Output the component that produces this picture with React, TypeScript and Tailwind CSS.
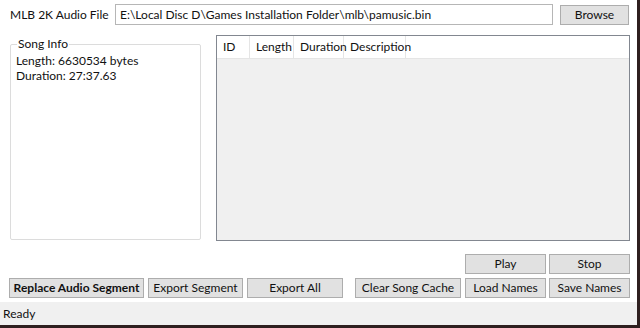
const font = { fontFamily: 'Lato, "Segoe UI", "Noto Sans", sans-serif' }

function WinButton({ label, className = '', bold = false }: { label: string; className?: string; bold?: boolean }) {
  return (
    <button
      type="button"
      className={`flex h-[20px] shrink-0 items-center justify-center whitespace-nowrap border border-[#adadad] bg-[#e1e1e1] text-[12px] leading-none text-[#111] ${bold ? 'font-bold' : ''} ${className}`}
    >
      {label}
    </button>
  )
}

const columns = [
  { name: 'ID', width: 'w-[33px]' },
  { name: 'Length', width: 'w-[44px]' },
  { name: 'Duration', width: 'w-[50px]' },
  { name: 'Description', width: 'w-[62px]' },
]

export default function App() {
  return (
    <div style={font} className="flex h-[328px] w-[640px] flex-col border-r-[3px] border-b-[3px] border-[#2e1f1f] bg-white text-[12px] text-[#111]">
      <div className="flex flex-1 flex-col">
        <div className="flex h-[28px] items-center pt-[1px]">
          <span className="ml-[10px] w-[105px] whitespace-nowrap">MLB 2K Audio File</span>
          <div className="flex h-[21px] w-[438px] items-center whitespace-nowrap border border-[#b6b6b6] bg-white px-[4px]">
            E:\Local Disc D\Games Installation Folder\mlb\pamusic.bin
          </div>
          <WinButton label="Browse" className="ml-[7px] w-[69px]" />
        </div>

        <div className="mt-[7px] flex">
          <fieldset className="ml-[10px] mt-[1px] h-[204px] w-[191px] rounded-[2px] border border-[#dcdcdc] px-[5px] leading-[15px]">
            <legend className="ml-[1px] px-[1px] leading-[16px]">Song Info</legend>
            <div className="mt-[1px] whitespace-nowrap">Length: 6630534 bytes</div>
            <div className="whitespace-nowrap">Duration: 27:37.63</div>
          </fieldset>

          <div className="ml-[15px] h-[206px] w-[414px] border border-[#828790] bg-[#f0f0f0]">
            <div className="flex h-[23px] border-b border-[#e5e5e5] bg-white">
              {columns.map((col) => (
                <div key={col.name} className={`${col.width} flex items-center whitespace-nowrap border-r border-[#e5e5e5] pl-[6px]`}>
                  {col.name}
                </div>
              ))}
            </div>
          </div>
        </div>

        <div className="mt-[13px] flex gap-[3px] pl-[465px]">
          <WinButton label="Play" className="w-[81px]" />
          <WinButton label="Stop" className="w-[81px]" />
        </div>

        <div className="mt-[4px] flex pl-[9px]">
          <WinButton label="Replace Audio Segment" bold className="w-[135px]" />
          <WinButton label="Export Segment" className="ml-[4px] w-[95px]" />
          <WinButton label="Export All" className="ml-[4px] w-[96px]" />
          <WinButton label="Clear Song Cache" className="ml-[12px] w-[106px]" />
          <WinButton label="Load Names" className="ml-[4px] w-[81px]" />
          <WinButton label="Save Names" className="ml-[3px] w-[81px]" />
        </div>
      </div>

      <div className="flex h-[23px] items-center bg-[#f0f0f0] pl-[3px]">Ready</div>
    </div>
  )
}
